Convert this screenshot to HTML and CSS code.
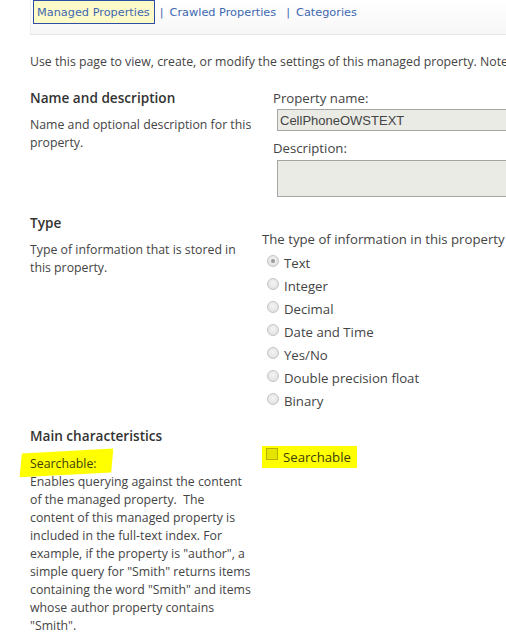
FILE: index.html
```html
<!DOCTYPE html>
<html lang="en">
  <head>
    <meta charset="UTF-8" />
    <title>Edit Managed Property</title>
    <link rel="stylesheet" href="styles.css">
  </head>
  <body>
    <div class="page">
      <div class="tabs">
        <a class="tab active" href="#">Managed Properties</a>
        <span class="sep">|</span>
        <a class="tab" href="#">Crawled Properties</a>
        <span class="sep">|</span>
        <a class="tab" href="#">Categories</a>
      </div>

      <p class="intro">Use this page to view, create, or modify the settings of this managed property. Note</p>

      <div class="section name-section">
        <div class="info">
          <h3>Name and description</h3>
          <p>Name and optional description for this property.</p>
        </div>
        <div class="fields">
          <label class="field-label">Property name:</label>
          <input class="textbox" type="text" value="CellPhoneOWSTEXT" readonly />
          <label class="field-label">Description:</label>
          <textarea class="textarea" readonly></textarea>
        </div>
      </div>

      <div class="section type-section">
        <div class="info">
          <h3>Type</h3>
          <p>Type of information that is stored in this property.</p>
        </div>
        <div class="fields">
          <div class="field-label">The type of information in this property</div>
          <ul class="radio-list">
            <li><span class="radio checked"></span>Text</li>
            <li><span class="radio"></span>Integer</li>
            <li><span class="radio"></span>Decimal</li>
            <li><span class="radio"></span>Date and Time</li>
            <li><span class="radio"></span>Yes/No</li>
            <li><span class="radio"></span>Double precision float</li>
            <li><span class="radio"></span>Binary</li>
          </ul>
        </div>
      </div>

      <div class="section main-section">
        <div class="info">
          <h3>Main characteristics</h3>
          <p><span class="marker marker-left">Searchable:</span><br />Enables querying against the content of the managed property.&nbsp; The content of this managed property is included in the full-text index. For example, if the property is "author", a simple query for "Smith" returns items containing the word "Smith" and items whose author property contains "Smith".</p>
        </div>
        <div class="fields">
          <div class="check-row">
            <span class="marker marker-right"><span class="checkbox"></span>Searchable</span>
          </div>
        </div>
      </div>
    </div>
  </body>
</html>
```

FILE: styles.css
```css
body {
  margin: 0;
  font-family: "Open Sans", "Noto Sans", sans-serif;
  color: #444;
  background: #fff;
  overflow: hidden;
}
.page {
  width: 900px;
}
.tabs {
  margin-left: 30px;
  height: 35px;
  box-sizing: border-box;
  border-left: 1px solid #ededed;
  border-bottom: 1px solid #e6e6e6;
  background: linear-gradient(#ffffff, #f7f7f7);
  display: flex;
  align-items: flex-start;
  padding-left: 2px;
  font-family: "DejaVu Sans", Verdana, sans-serif;
  font-size: 11.3px;
}
.tab {
  color: #3d68b0;
  text-decoration: none;
  line-height: 20px;
  border: 1px solid transparent;
  padding: 2px 4px 0 3px;
}
.tab.active {
  background: #fffbc9;
  border-color: #2d4fa3;
}
.sep {
  color: #3d68b0;
  line-height: 20px;
  padding-top: 3px;
  margin: 0 2px 0 5px;
}
.intro {
  margin: 18px 0 0 30px;
  font-size: 12.3px;
  line-height: 18px;
  white-space: nowrap;
}
.section {
  display: grid;
  grid-template-columns: 232px 1fr;
  padding-left: 30px;
}
.name-section {
  margin-top: 17px;
}
.type-section {
  margin-top: 16px;
}
.main-section {
  margin-top: 14px;
}
.info h3 {
  margin: 0;
  font-size: 13.6px;
  font-weight: 600;
  line-height: 20px;
  color: #333;
}
.info p {
  margin: 8px 0 0;
  width: 225px;
  font-size: 12.3px;
  line-height: 18px;
}
.main-section .info p {
  margin-top: 9px;
  width: 221px;
}
.fields {
  display: flex;
  flex-direction: column;
  align-items: flex-start;
  font-size: 13.2px;
}
.name-section .fields {
  padding: 1px 0 0 11px;
}
.type-section .fields {
  padding-top: 17px;
}
.field-label {
  line-height: 18px;
  white-space: nowrap;
}
.textbox,
.textarea {
  margin: 2px 0 8px 4px;
  width: 420px;
  box-sizing: border-box;
  border: 1px solid #a5a5a5;
  background: #ebebe6;
  font-family: "Liberation Sans", Arial, sans-serif;
  font-size: 13px;
  color: #444;
  padding: 0 2px;
  outline: none;
}
.textbox {
  height: 22px;
}
.textarea {
  height: 37px;
  margin: 3px 0 0 4px;
  resize: none;
  display: block;
}
.radio-list {
  list-style: none;
  margin: 3px 0 0;
  padding: 0 0 0 5px;
}
.radio-list li {
  height: 23px;
  display: flex;
  align-items: center;
  white-space: nowrap;
}
.radio {
  width: 10px;
  height: 10px;
  border-radius: 50%;
  border: 1px solid #c4c4c4;
  background: radial-gradient(circle at 50% 40%, #f4f4f4, #dcdcdc);
  margin: -3px 5px 0 0;
  display: flex;
  align-items: center;
  justify-content: center;
}
.radio.checked::after {
  content: "";
  width: 4px;
  height: 4px;
  border-radius: 50%;
  background: #9a9a9a;
}
.check-row {
  padding: 20px 0 0 4px;
}
.marker {
  position: relative;
  color: #3d3d08;
}
.marker::before {
  content: "";
  position: absolute;
  background: #ffff00;
  z-index: -1;
}
.marker-left::before {
  left: -9px;
  right: -15px;
  top: -4px;
  bottom: -3px;
  transform: skewX(-8deg) rotate(-3deg);
}
.marker-right {
  display: inline-flex;
  align-items: center;
  line-height: 18px;
}
.marker-right::before {
  left: -4px;
  right: -6px;
  top: -2px;
  bottom: -2px;
}
.checkbox {
  width: 10px;
  height: 10px;
  border: 1px solid #b3b300;
  background: #e4e400;
  margin: -6px 5px 0 0;
}
```
